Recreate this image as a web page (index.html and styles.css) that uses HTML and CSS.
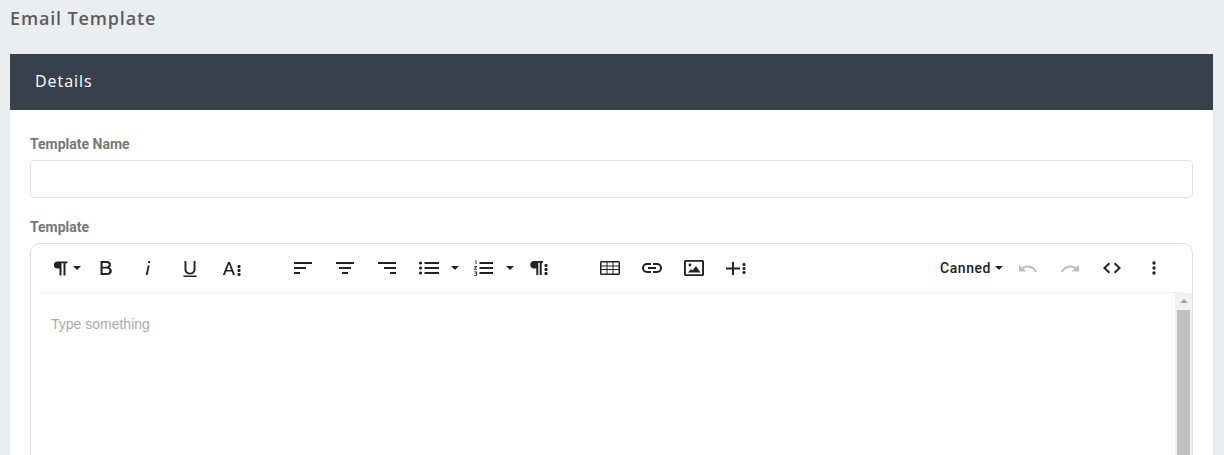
FILE: index.html
```html
<!DOCTYPE html>
<html lang="en">
<head>
<meta charset="utf-8">
<title>Email Template</title>
<link rel="stylesheet" href="styles.css">
</head>
<body>
<h1 class="page-title">Email Template</h1>
<section class="card">
  <header class="card-head">Details</header>
  <div class="card-body">
    <label class="label">Template Name</label>
    <input class="input" type="text">
    <label class="label label-second">Template</label>
    <div class="editor">
      <div class="toolbar">
        <div class="group">
          <span class="btn btn-first"><svg class="ico" viewBox="0 0 24 24"><path d="M9.500 5.500h10v1.800h-2V19.500h-2V7.300h-2V19.500h-2v-6.900H9.500a3.550 3.550 0 0 1 0-7.100z"/></svg><i class="caret caret-first"></i></span>
          <span class="btn"><svg class="ico" viewBox="0 0 24 24"><path d="M6.500 5h6.100c2.600 0 4.400 1.500 4.400 3.700 0 1.300-.7 2.300-1.800 2.900 1.500.5 2.600 1.800 2.600 3.400 0 2.400-1.900 4-4.600 4H6.500zm2.100 1.900v3.900h3.600c1.400 0 2.600-.7 2.600-2s-1.200-1.900-2.600-1.900zm0 5.700v4.500h4c1.600 0 2.800-.8 2.800-2.300s-1.200-2.200-2.800-2.200z"/></svg></span>
          <span class="btn"><svg class="ico" viewBox="0 0 24 24"><path d="M12.400 5h1.900l-.4 2h-1.900zM11.700 9.500h1.900L11.700 19H9.800z"/></svg></span>
          <span class="btn"><svg class="ico" viewBox="0 0 24 24"><path d="M5.500 19.500h13v1.500h-13zM6.500 5h1.900v8.300c0 2.200 1.500 3.500 3.600 3.500s3.600-1.300 3.600-3.500V5h1.900v8.300c0 3.200-2.300 5.200-5.500 5.200s-5.500-2-5.500-5.200z"/></svg></span>
          <span class="btn"><svg class="ico" viewBox="0 0 24 24"><path d="M8 6h1.900l5.200 13h-2.100l-1.200-3.400H6.100L4.900 19H2.800zM6.800 13.900h4.300L9 7.900z"/><rect x="17.500" y="9" width="3" height="3" rx="1"/><rect x="17.500" y="13" width="3" height="3" rx="1"/><rect x="17.500" y="17" width="3" height="3" rx="1"/></svg></span>
        </div>
        <div class="group">
          <span class="btn"><svg class="ico" viewBox="0 0 24 24"><path d="M3 6h18v2H3zM3 11h12v2H3zM3 16h6v2H3z"/></svg></span>
          <span class="btn"><svg class="ico" viewBox="0 0 24 24"><path d="M3 6h18v2H3zM6 11h12v2H6zM9 16h6v2H9z"/></svg></span>
          <span class="btn"><svg class="ico" viewBox="0 0 24 24"><path d="M3 6h18v2H3zM9 11h12v2H9zM15 16h6v2h-6z"/></svg></span>
          <span class="btn btn-drop"><svg class="ico" viewBox="0 0 24 24"><path d="M7.500 6h14.500v2H7.500zM7.500 11h14.500v2H7.500zM7.500 16h14.500v2H7.500z"/><circle cx="3.600" cy="7" r="1.600"/><circle cx="3.600" cy="12" r="1.600"/><circle cx="3.600" cy="17" r="1.600"/></svg><i class="caret"></i></span>
          <span class="btn btn-drop"><svg class="ico" viewBox="0 0 24 24"><path d="M7.500 6h13.500v2H7.500zM7.500 11h13.500v2H7.500zM7.500 16h13.500v2H7.500z"/><path d="M3 4.500h1.500v3.800h-.9V5.300H3zM2 10h3v.8L3.200 13H5v.8H2V13l1.800-2.200H2zM2 15.500h3v4.300H2V19h2v-.9H2.800v-.7H4v-1.100H2z"/></svg><i class="caret"></i></span>
          <span class="btn"><svg class="ico" viewBox="0 0 24 24"><path d="M7 5h9v1.800h-1.300V19h-2V6.800h-1.400V19h-2v-6.600H7a3.700 3.700 0 0 1 0-7.400z"/><rect x="17.500" y="8" width="3" height="3" rx="1"/><rect x="17.500" y="12" width="3" height="3" rx="1"/><rect x="17.500" y="16" width="3" height="3" rx="1"/></svg></span>
        </div>
        <div class="group">
          <span class="btn"><svg class="ico" viewBox="0 0 24 24"><path fill-rule="evenodd" d="M3.500 5h17A1.500 1.500 0 0 1 22 6.500v11a1.500 1.500 0 0 1-1.500 1.500h-17A1.500 1.500 0 0 1 2 17.500v-11A1.500 1.500 0 0 1 3.500 5zm0 1.500v3h5v-3zm6 0v3h5v-3zm6 0v3h5v-3zm-12 4v2.600h5v-2.600zm6 0v2.600h5v-2.600zm6 0v2.600h5v-2.600zm-12 3.600v3.400h5v-3.400zm6 0v3.400h5v-3.400zm6 0v3.400h5v-3.400z"/></svg></span>
          <span class="btn"><svg class="ico" viewBox="0 0 24 24"><path d="M7 7h4v2H7a3 3 0 0 0 0 6h4v2H7A5 5 0 0 1 7 7zM13 7h4a5 5 0 0 1 0 10h-4v-2h4a3 3 0 0 0 0-6h-4zM8 11h8v2H8z"/></svg></span>
          <span class="btn"><svg class="ico" viewBox="0 0 24 24"><path fill-rule="evenodd" d="M3.500 4h17A1.500 1.500 0 0 1 22 5.500v13a1.500 1.500 0 0 1-1.500 1.500h-17A1.500 1.500 0 0 1 2 18.500v-13A1.500 1.500 0 0 1 3.500 4zm.4 1.800v12.400h16.200V5.800z"/><circle cx="8" cy="9" r="1.400"/><path d="M6 16.500l3-3.500 1.500 1.500L14 10l4.500 6.500z"/></svg></span>
          <span class="btn"><svg class="ico" viewBox="0 0 24 24"><path d="M8 6h2v5.500h6v2h-6V19H8v-5.500H2v-2h6z"/><rect x="18.500" y="7" width="3" height="3" rx="1.300"/><rect x="18.500" y="11" width="3" height="3" rx="1.300"/><rect x="18.500" y="15" width="3" height="3" rx="1.300"/></svg></span>
        </div>
        <div class="group group-end">
          <span class="canned">Canned<i class="caret caret-canned"></i></span>
          <span class="btn btn-off"><svg class="ico" viewBox="0 0 24 24"><path d="M11 9.500c4.200 0 7.700 1.500 10 6.200l-1.700.6c-2-3.400-4.700-4.800-8.300-4.800-1.400 0-2.700.3-3.800.9L10.500 15.500H3V9l2.900 2.400C7.300 10.200 9 9.500 11 9.500z"/></svg></span>
          <span class="btn btn-off"><svg class="ico" viewBox="0 0 24 24"><path d="M13 9.500c-4.200 0-7.700 1.500-10 6.200l1.700.6c2-3.400 4.700-4.800 8.300-4.800 1.400 0 2.700.3 3.800.9L13.500 15.500H21V9l-2.900 2.400C16.700 10.200 15 9.500 13 9.500z"/></svg></span>
          <span class="btn"><svg class="ico" viewBox="0 0 24 24"><path d="M8.700 6.500l1.400 1.400L5.900 12l4.200 4.100-1.400 1.400L3 12zM15.300 6.500L21 12l-5.700 5.500-1.400-1.400 4.200-4.100-4.200-4.100z"/></svg></span>
          <span class="btn"><svg class="ico" viewBox="0 0 24 24"><circle cx="12" cy="7" r="1.700"/><circle cx="12" cy="12" r="1.700"/><circle cx="12" cy="17" r="1.700"/></svg></span>
        </div>
      </div>
      <div class="content">
        <div class="placeholder">Type something</div>
        <div class="scroll">
          <i class="scroll-up"></i>
          <div class="thumb"></div>
        </div>
      </div>
    </div>
  </div>
</section>
</body>
</html>
```
FILE: styles.css
```css
* { box-sizing: border-box; }
html, body { height: 100%; overflow: hidden; }
body {
  margin: 0;
  padding: 0 11px 0 10px;
  background: #ebeef1;
  font-family: Roboto, "Liberation Sans", sans-serif;
}
.page-title {
  margin: 0;
  height: 54px;
  padding-top: 6px;
  font-family: "Open Sans", sans-serif;
  font-size: 18px;
  line-height: 24px;
  font-weight: 600;
  letter-spacing: .85px;
  color: #5c5c5c;
}
.card { background: #fff; height: 500px; }
.card-head {
  height: 56px;
  padding-left: 25px;
  background: #37414b;
  color: #fff;
  font-family: "Open Sans", sans-serif;
  font-size: 16px;
  line-height: 55px;
  letter-spacing: .95px;
}
.card-body { padding: 25px 20px 0; }
.label {
  display: block;
  height: 25px;
  font-size: 14px;
  line-height: 18px;
  font-weight: 700;
  color: #777;
}
.label-second { margin-top: 20px; }
.input {
  display: block;
  width: 100%;
  height: 38px;
  border: 1px solid #e3e3e3;
  border-radius: 4px;
  background: #fff;
}
.editor {
  height: 400px;
  border: 1px solid #e2e2e2;
  border-radius: 10px 10px 0 0;
}
.toolbar {
  display: flex;
  height: 49px;
  margin: 0 9px;
  padding-top: 4px;
  border-bottom: 1px solid #efefef;
  color: #222;
}
.group { display: flex; margin-right: 29px; }
.group-end { margin: 0 7px 0 auto; }
.btn {
  display: flex;
  align-items: center;
  width: 42px;
  height: 40px;
  padding-left: 8px;
  flex: none;
}
.btn-first { width: 46px; }
.btn-drop { width: 55px; }
.btn-off { color: #bdbdbd; }
.ico { width: 24px; height: 24px; fill: currentColor; flex: none; }
.caret {
  width: 0;
  height: 0;
  margin-left: 10px;
  border: 4px solid transparent;
  border-top-color: #222;
  border-bottom: 0;
}
.caret-first { margin-left: 1px; }
.canned {
  display: flex;
  align-items: center;
  height: 40px;
  padding-right: 5px;
  font-size: 14px;
  font-weight: 500;
  letter-spacing: .55px;
  color: #222;
}
.caret-canned { margin-left: 4px; }
.content { display: flex; justify-content: space-between; height: 300px; }
.placeholder {
  padding: 23px 0 0 20px;
  font-family: "Liberation Sans", Arial, sans-serif;
  font-size: 14px;
  line-height: 16px;
  color: #aaa;
}
.scroll {
  width: 17px;
  background: #f1f1f1;
  padding: 0 2px;
}
.scroll-up {
  display: block;
  width: 0;
  height: 0;
  margin: 6px auto 7px;
  border: 4px solid transparent;
  border-bottom-color: #a3a3a3;
  border-top: 0;
}
.thumb { height: 200px; background: #c1c1c1; }
```
